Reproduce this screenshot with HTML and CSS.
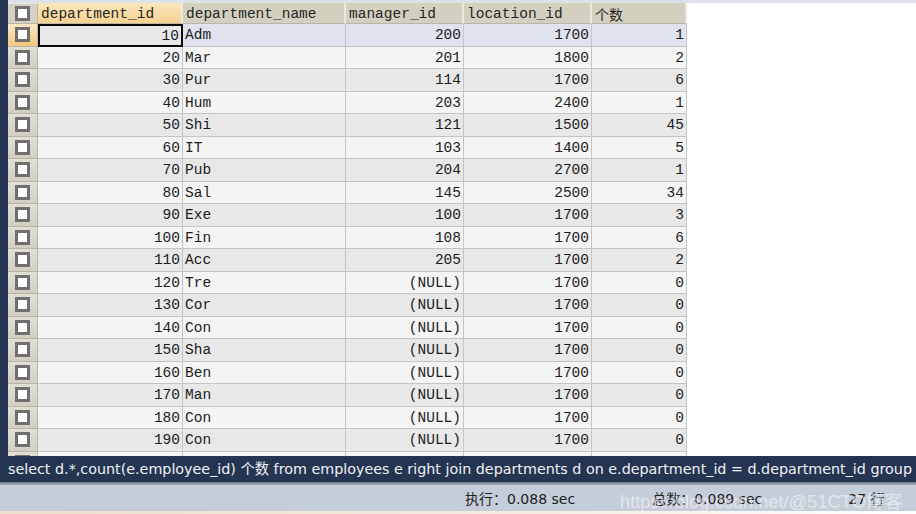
FILE: index.html
```html
<!DOCTYPE html>
<html>
<head>
<meta charset="utf-8">
<link rel="stylesheet" href="styles.css">
</head>
<body>
<div class="app">
  <div class="gridpane">
    <div class="topstrip"></div>
    <div class="table">
      <div class="row head">
        <div class="cell chk"><span class="box"></span></div>
        <div class="cell h sorted">department_id</div>
        <div class="cell h">department_name</div>
        <div class="cell h">manager_id</div>
        <div class="cell h">location_id</div>
        <div class="cell h cjk">个数</div>
      </div>
      <div class="row sel">
        <div class="cell chk"><span class="box"></span></div>
        <div class="cell n focus">10</div><div class="cell t">Adm</div><div class="cell n">200</div><div class="cell n">1700</div><div class="cell n">1</div>
      </div>
      <div class="row even">
        <div class="cell chk"><span class="box"></span></div>
        <div class="cell n">20</div><div class="cell t">Mar</div><div class="cell n">201</div><div class="cell n">1800</div><div class="cell n">2</div>
      </div>
      <div class="row odd">
        <div class="cell chk"><span class="box"></span></div>
        <div class="cell n">30</div><div class="cell t">Pur</div><div class="cell n">114</div><div class="cell n">1700</div><div class="cell n">6</div>
      </div>
      <div class="row even">
        <div class="cell chk"><span class="box"></span></div>
        <div class="cell n">40</div><div class="cell t">Hum</div><div class="cell n">203</div><div class="cell n">2400</div><div class="cell n">1</div>
      </div>
      <div class="row odd">
        <div class="cell chk"><span class="box"></span></div>
        <div class="cell n">50</div><div class="cell t">Shi</div><div class="cell n">121</div><div class="cell n">1500</div><div class="cell n">45</div>
      </div>
      <div class="row even">
        <div class="cell chk"><span class="box"></span></div>
        <div class="cell n">60</div><div class="cell t">IT</div><div class="cell n">103</div><div class="cell n">1400</div><div class="cell n">5</div>
      </div>
      <div class="row odd">
        <div class="cell chk"><span class="box"></span></div>
        <div class="cell n">70</div><div class="cell t">Pub</div><div class="cell n">204</div><div class="cell n">2700</div><div class="cell n">1</div>
      </div>
      <div class="row even">
        <div class="cell chk"><span class="box"></span></div>
        <div class="cell n">80</div><div class="cell t">Sal</div><div class="cell n">145</div><div class="cell n">2500</div><div class="cell n">34</div>
      </div>
      <div class="row odd">
        <div class="cell chk"><span class="box"></span></div>
        <div class="cell n">90</div><div class="cell t">Exe</div><div class="cell n">100</div><div class="cell n">1700</div><div class="cell n">3</div>
      </div>
      <div class="row even">
        <div class="cell chk"><span class="box"></span></div>
        <div class="cell n">100</div><div class="cell t">Fin</div><div class="cell n">108</div><div class="cell n">1700</div><div class="cell n">6</div>
      </div>
      <div class="row odd">
        <div class="cell chk"><span class="box"></span></div>
        <div class="cell n">110</div><div class="cell t">Acc</div><div class="cell n">205</div><div class="cell n">1700</div><div class="cell n">2</div>
      </div>
      <div class="row even">
        <div class="cell chk"><span class="box"></span></div>
        <div class="cell n">120</div><div class="cell t">Tre</div><div class="cell n">(NULL)</div><div class="cell n">1700</div><div class="cell n">0</div>
      </div>
      <div class="row odd">
        <div class="cell chk"><span class="box"></span></div>
        <div class="cell n">130</div><div class="cell t">Cor</div><div class="cell n">(NULL)</div><div class="cell n">1700</div><div class="cell n">0</div>
      </div>
      <div class="row even">
        <div class="cell chk"><span class="box"></span></div>
        <div class="cell n">140</div><div class="cell t">Con</div><div class="cell n">(NULL)</div><div class="cell n">1700</div><div class="cell n">0</div>
      </div>
      <div class="row odd">
        <div class="cell chk"><span class="box"></span></div>
        <div class="cell n">150</div><div class="cell t">Sha</div><div class="cell n">(NULL)</div><div class="cell n">1700</div><div class="cell n">0</div>
      </div>
      <div class="row even">
        <div class="cell chk"><span class="box"></span></div>
        <div class="cell n">160</div><div class="cell t">Ben</div><div class="cell n">(NULL)</div><div class="cell n">1700</div><div class="cell n">0</div>
      </div>
      <div class="row odd">
        <div class="cell chk"><span class="box"></span></div>
        <div class="cell n">170</div><div class="cell t">Man</div><div class="cell n">(NULL)</div><div class="cell n">1700</div><div class="cell n">0</div>
      </div>
      <div class="row even">
        <div class="cell chk"><span class="box"></span></div>
        <div class="cell n">180</div><div class="cell t">Con</div><div class="cell n">(NULL)</div><div class="cell n">1700</div><div class="cell n">0</div>
      </div>
      <div class="row odd">
        <div class="cell chk"><span class="box"></span></div>
        <div class="cell n">190</div><div class="cell t">Con</div><div class="cell n">(NULL)</div><div class="cell n">1700</div><div class="cell n">0</div>
      </div>
      <div class="row even">
        <div class="cell chk"><span class="box"></span></div>
        <div class="cell n"></div><div class="cell t"></div><div class="cell n"></div><div class="cell n"></div><div class="cell n"></div>
      </div>
    </div>
  </div>
  <div class="sqlbar">select d.*,count(e.employee_id) 个数 from employees e right join departments d on e.department_id = d.department_id group</div>
  <div class="sep"></div>
  <div class="status">
    <span class="exec">执行：0.088 sec</span>
    <span class="total">总数：0.089 sec</span>
    <span class="rows">27 行</span>
    <span class="watermark">https://blog.csdn.net/@51CTO博客</span>
  </div>
  <div class="bottomstrip"></div>
</div>
</body>
</html>
```
FILE: styles.css
```css
html, body {
  margin: 0;
  padding: 0;
  width: 916px;
  height: 514px;
  overflow: hidden;
  background: #ffffff;
}
.app {
  display: flex;
  flex-direction: column;
  width: 916px;
  height: 514px;
  background: #253551;
}
.gridpane {
  height: 456px;
  flex: none;
  margin-left: 8px;
  background: #ffffff;
  overflow: hidden;
  display: flex;
  flex-direction: column;
}
.topstrip {
  height: 3px;
  flex: none;
  background: #dde2e9;
}
.table {
  display: flex;
  flex-direction: column;
}
.row {
  display: grid;
  grid-template-columns: 30px 145px 163px 118px 128px 95px;
  height: 22.5px;
  flex: none;
  font-family: "Liberation Mono", "Courier New", "Noto Sans CJK SC", monospace;
  font-size: 14.5px;
  color: #1c1c1c;
}
.row.head {
  height: 21px;
}
.cell {
  box-sizing: border-box;
  border-right: 1px solid #c4c4c4;
  border-bottom: 1px solid #c4c4c4;
  display: flex;
  align-items: center;
  padding: 1px 2px 0 2px;
  white-space: nowrap;
  overflow: hidden;
}
.cell.n {
  justify-content: flex-end;
}
.cell.t {
  padding-left: 2px;
}
.row.even .cell { background: #f4f4f4; }
.row.odd .cell { background: #e8e8e8; }
.row.sel .cell { background: #dfe3ed; }
.row .cell.chk {
  justify-content: center;
  padding: 0;
  background: linear-gradient(#e2dfd7, #d2cec4);
  border-right: 1px solid #b8b4aa;
  border-bottom: 1px solid #b8b4aa;
}
.row.sel .cell.chk {
  background: linear-gradient(#fbe8c6, #f3c67c);
}
.row.head .cell.chk {
  background: #d4d0c4;
  border-top: 1px solid #ece9e2;
}
.box {
  width: 15px;
  height: 15px;
  box-sizing: border-box;
  border: 3px solid #6f6f6f;
  background: #ffffff;
}
.row .cell.h {
  background: #d4d0c0;
  border-right: 2px solid #ebe8df;
  border-bottom: 1px solid #b9b5a8;
  padding-left: 3px;
  color: #262626;
}
.row .cell.h.sorted {
  background: linear-gradient(#fbe6bd, #f6d290);
}
.cell.h.cjk {
  font-family: "Noto Sans CJK SC", sans-serif;
  font-size: 14px;
}
.row.sel .cell.focus {
  background: #e8e8e8;
  border: 2px solid #0a0a0a;
}
.sqlbar {
  height: 26px;
  flex: none;
  background: #253551;
  color: #eef1f6;
  font-family: "DejaVu Sans", "Noto Sans CJK SC", sans-serif;
  font-size: 14.3px;
  line-height: 26px;
  padding-left: 8px;
  white-space: nowrap;
  overflow: hidden;
}
.sep {
  height: 3px;
  flex: none;
  background: linear-gradient(#6e7a8c, #a9b2bf);
}
.status {
  position: relative;
  height: 26px;
  flex: none;
  background: #c4cdd9;
  font-family: "DejaVu Sans", "Noto Sans CJK SC", sans-serif;
  font-size: 14px;
  color: #1d1d1d;
  display: flex;
  align-items: center;
}
.exec {
  margin-left: 465px;
}
.total {
  margin-left: 77px;
}
.rows {
  margin-left: 86px;
}
.watermark {
  position: absolute;
  left: 620px;
  top: 2px;
  font-family: "Liberation Sans", "Noto Sans CJK SC", sans-serif;
  font-size: 18.3px;
  color: rgba(255, 255, 255, 0.5);
  white-space: nowrap;
}
.bottomstrip {
  flex: 1;
  background: linear-gradient(90deg, #eadfca, #f3ede2 60%, #ffffff);
}
```
